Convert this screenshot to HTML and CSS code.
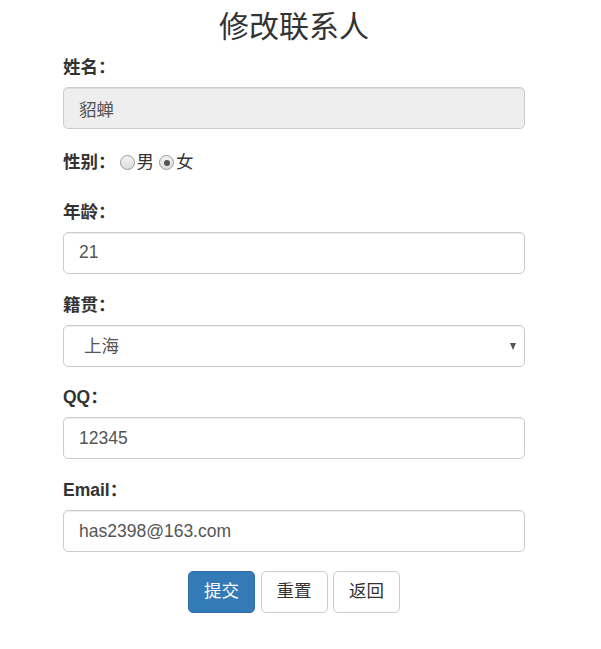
FILE: index.html
```html
<!DOCTYPE html>
<html lang="zh-CN">
<head>
<meta charset="utf-8">
<title>修改联系人</title>
<link rel="stylesheet" href="styles.css">
</head>
<body>
<div class="page">
  <h3 class="title">修改联系人</h3>
  <form class="form">
    <div class="group">
      <label class="field-label">姓名：</label>
      <input class="control" type="text" value="貂蝉" disabled>
    </div>
    <div class="group radio-row">
      <label class="field-label inline">性别：</label>
      <label class="opt"><input class="radio" type="radio" name="sex">男</label>
      <label class="opt"><input class="radio" type="radio" name="sex" checked>女</label>
    </div>
    <div class="group">
      <label class="field-label">年龄：</label>
      <input class="control" type="text" value="21">
    </div>
    <div class="group">
      <label class="field-label">籍贯：</label>
      <div class="select-wrap">
        <select class="control select">
          <option>上海</option>
          <option>北京</option>
          <option>广东</option>
        </select>
      </div>
    </div>
    <div class="group">
      <label class="field-label">QQ：</label>
      <input class="control" type="text" value="12345">
    </div>
    <div class="group">
      <label class="field-label">Email：</label>
      <input class="control" type="text" value="has2398@163.com">
    </div>
    <div class="actions">
      <button class="btn btn-primary" type="submit">提交</button>
      <button class="btn" type="reset">重置</button>
      <button class="btn" type="button">返回</button>
    </div>
  </form>
</div>
</body>
</html>
```

FILE: styles.css
```css
* { box-sizing: border-box; }

html, body {
  margin: 0;
  padding: 0;
  background: #fff;
}

body {
  font-family: "Liberation Sans", "Noto Sans CJK SC", sans-serif;
  font-size: 17.5px;
  line-height: 25px;
  color: #333;
}

.page {
  width: 462px;
  margin-left: 63px;
}

.title {
  margin: 10px 0 12px;
  font-size: 30px;
  line-height: 33px;
  font-weight: 400;
  text-align: center;
  color: #333;
}

.form {
  margin: 0;
}

.group {
  margin-bottom: 18.75px;
}

.field-label {
  display: block;
  margin-bottom: 7px;
  font-weight: bold;
  line-height: 25px;
}

.field-label.inline {
  display: inline-block;
  margin-bottom: 0;
  margin-right: 4px;
}

.radio-row {
  display: flex;
  align-items: center;
  height: 25px;
  margin-top: 21px;
  margin-bottom: 24.75px;
}

.opt {
  display: inline-flex;
  align-items: center;
  margin-right: 5px;
  color: #333;
}

.radio {
  appearance: none;
  -webkit-appearance: none;
  width: 15px;
  height: 15px;
  margin: 0 2px 0 0;
  border: 1px solid #9a9a9a;
  border-radius: 50%;
  background: linear-gradient(#f4f4f4, #dcdcdc);
  position: relative;
}

.radio:checked::after {
  content: "";
  position: absolute;
  left: 3.5px;
  top: 3.5px;
  width: 6px;
  height: 6px;
  border-radius: 50%;
  background: #555;
}

.control {
  display: block;
  width: 100%;
  height: 42px;
  padding: 7px 15px;
  font-family: "Liberation Sans", "Noto Sans CJK SC", sans-serif;
  font-size: 17.5px;
  line-height: 25px;
  color: #555;
  background: #fff;
  border: 1px solid #ccc;
  border-radius: 5px;
  box-shadow: inset 0 1px 1px rgba(0, 0, 0, 0.075);
  outline: none;
}

.control:disabled {
  background: #eee;
  color: #555;
  opacity: 1;
  -webkit-text-fill-color: #555;
}

.select-wrap {
  position: relative;
}

.select {
  appearance: none;
  -webkit-appearance: none;
  padding-left: 20px;
  padding-top: 8px;
  padding-bottom: 6px;
}

.select-wrap::after {
  content: "";
  position: absolute;
  right: 9px;
  top: 18px;
  width: 0;
  height: 0;
  border-left: 3.5px solid transparent;
  border-right: 3.5px solid transparent;
  border-top: 7px solid #555;
  pointer-events: none;
}

.actions {
  display: flex;
  justify-content: center;
  gap: 5.5px;
}

.btn {
  height: 42px;
  padding: 7px 15px;
  font-family: "Liberation Sans", "Noto Sans CJK SC", sans-serif;
  font-size: 17.5px;
  line-height: 25px;
  color: #333;
  background: #fff;
  border: 1px solid #ccc;
  border-radius: 5px;
  cursor: pointer;
}

.btn-primary {
  color: #fff;
  background: #337ab7;
  border-color: #2e6da4;
}
```
